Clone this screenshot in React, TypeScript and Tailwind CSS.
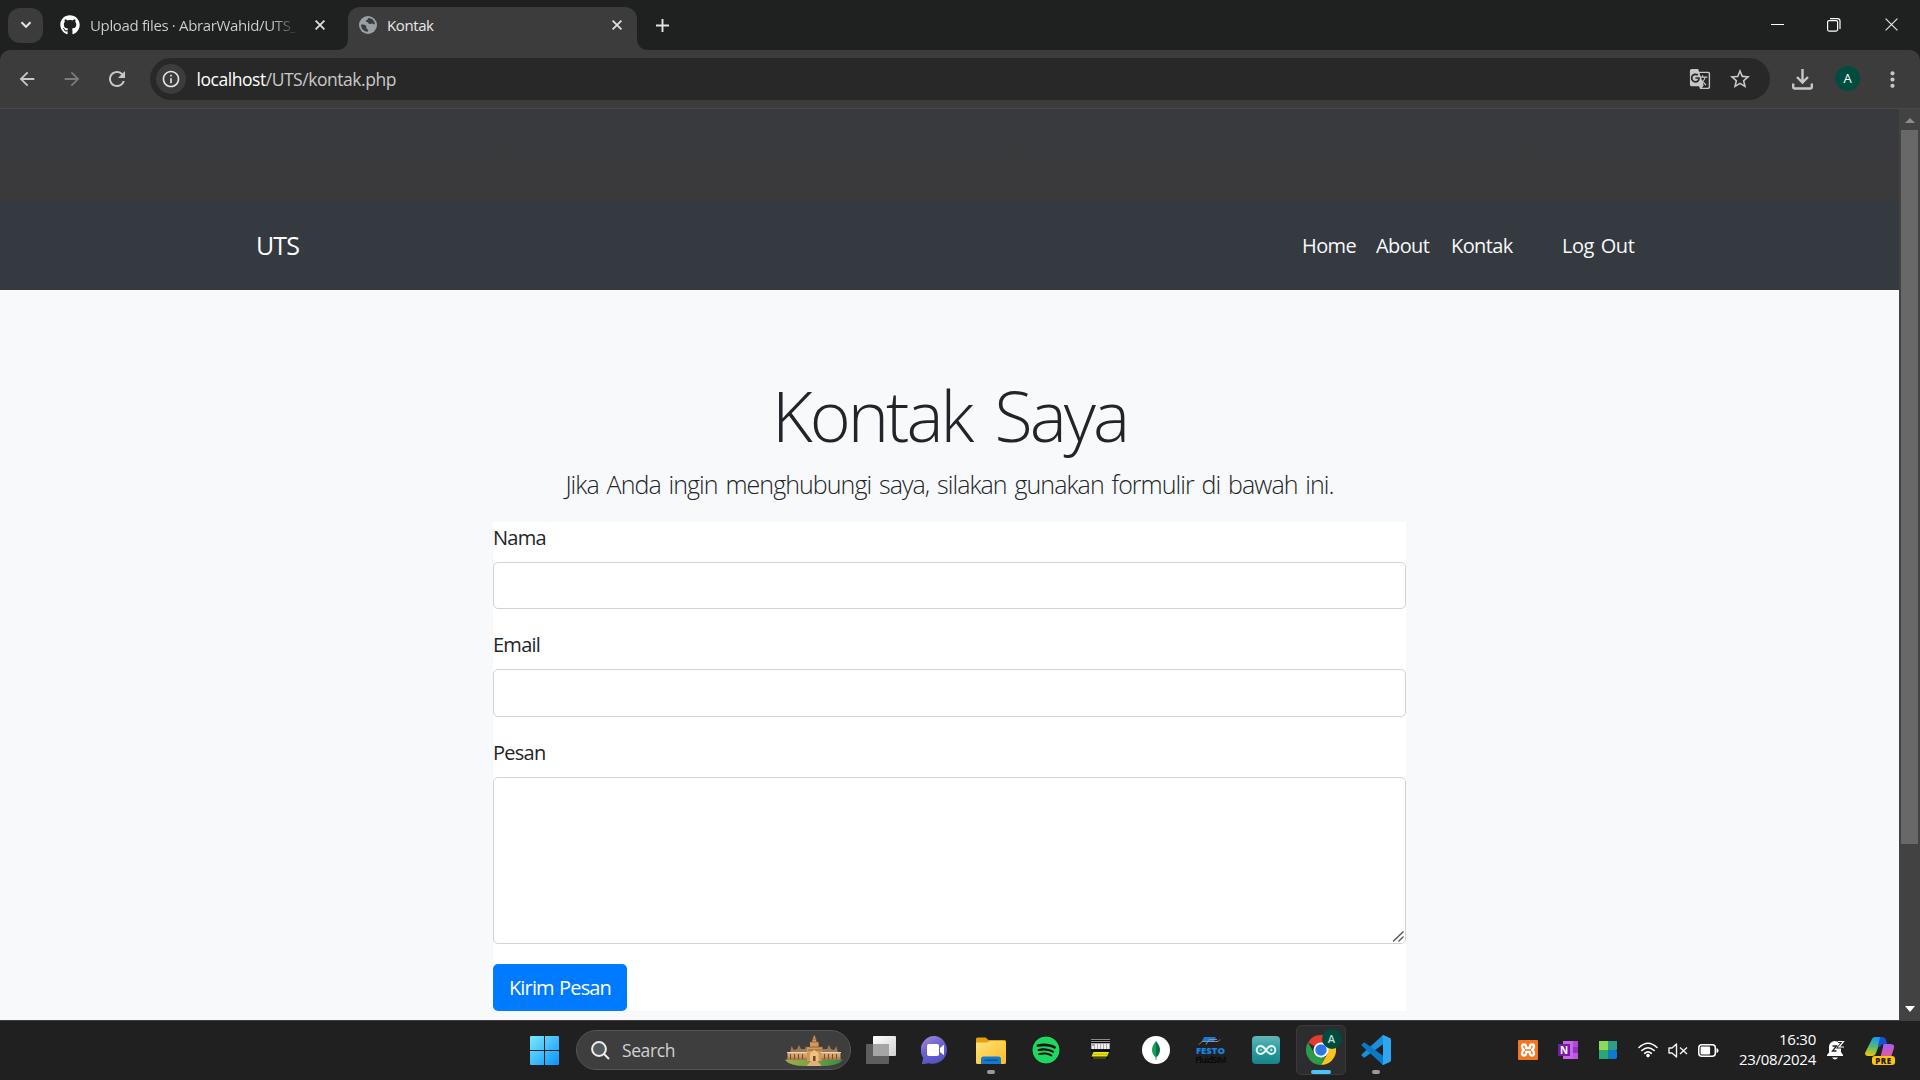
import React from "react";
import { FaGithub, FaSpotify } from "react-icons/fa";
import { MdArrowBack, MdArrowForward, MdRefresh, MdInfoOutline, MdGTranslate, MdStarBorder, MdMoreVert } from "react-icons/md";

function Chevron() {
  return (
    <svg width="12" height="8" viewBox="0 0 12 8" fill="none" stroke="#e3e3e3" strokeWidth="2">
      <path d="M1.5 1.2 6 5.8l4.5-4.6" />
    </svg>
  );
}

function Cross({ size = 10, width = 1.7 }: { size?: number; width?: number }) {
  return (
    <svg width={size} height={size} viewBox={`0 0 ${size} ${size}`} stroke="#e3e3e3" strokeWidth={width}>
      <path d={`M.6.6 ${size - 0.6} ${size - 0.6}M${size - 0.6}.6.6 ${size - 0.6}`} />
    </svg>
  );
}

function Globe() {
  return (
    <svg width="18" height="18" viewBox="0 0 18 18">
      <circle cx="9" cy="9" r="9" fill="#9aa0a6" />
      <path d="M2 8.6c2.5 0 4.700.2 5.200 1.700.4 1.200-.5 2 .8 2.600 1.300.5 1.700 1.500.9 2.700C5 16 2 12.800 2 8.600ZM9.500 2c-1 .8-.4 1.600-1.700 2-1.400.5-1.100 1.900.2 2.100 1.600.2 1.300 1.900 2.700 2 1.500 0 2.300-1 3.300-.2.7.6 1.300.5 2 .3C15.600 4.600 12.900 2.200 9.500 2Z" fill="#3c3c3c" />
    </svg>
  );
}

function TabStrip() {
  return (
    <div className="flex h-[50px] shrink-0 items-center bg-[#1f2120] pl-2">
      <div className="flex h-[35px] w-[35px] items-center justify-center rounded-[12px] bg-[#3c3c3c]"><Chevron /></div>
      <FaGithub className="ml-[17px] h-5 w-5 shrink-0 text-white" />
      <div className="ml-[10px] w-[208px] overflow-hidden whitespace-nowrap bg-gradient-to-r from-[#d0d2d1] from-88% to-[#1f2120] bg-clip-text text-[15px] tracking-[-0.350px] text-transparent">
        Upload files · AbrarWahid/UTS_P
      </div>
      <div className="ml-[17px] flex w-[10px]"><Cross /></div>
      <div className="flex h-full w-[23px] items-end justify-end">
        <svg width="12" height="12"><path d="M12 0v12H0C8 12 12 8 12 0Z" fill="#3c3c3c" /></svg>
      </div>
      <div className="mt-[7px] flex h-[43px] w-[289px] items-center rounded-t-[12px] bg-[#3c3c3c] pb-[7px] pl-[11px] pr-[15px]">
        <Globe />
        <span className="ml-[10px] flex-1 text-[15px] tracking-[-0.400px] text-[#e8e8e8]">Kontak</span>
        <Cross />
      </div>
      <div className="flex h-full w-3 items-end">
        <svg width="12" height="12"><path d="M0 0v12h12C4 12 0 8 0 0Z" fill="#3c3c3c" /></svg>
      </div>
      <svg className="ml-[7px]" width="13" height="13" stroke="#e3e3e3" strokeWidth="1.900"><path d="M6.500 0v13M0 6.500h13" /></svg>
      <div className="flex flex-1 items-center justify-end pb-px pr-[22px]">
        <svg width="13" height="13"><path d="M0 6.500h13" stroke="#fff" /></svg>
        <svg className="ml-[43px]" width="14" height="14" fill="none" stroke="#fff" strokeWidth="1.200">
          <rect x=".6" y="2.600" width="10" height="10.500" rx="1.500" />
          <path d="M3 .6h7.500q2.500 0 2.500 2.500V11" />
        </svg>
        <div className="ml-[44px]"><Cross size={13} width={1.200} /></div>
      </div>
    </div>
  );
}

function Toolbar() {
  return (
    <div className="bg-[#1f2120]">
      <div className="flex h-[59px] items-center rounded-t-[10px] border-b border-[#484a48] bg-[#3c3c3c] text-[#c7c7c7]">
        <MdArrowBack className="ml-[16px] h-[22px] w-[22px]" />
        <MdArrowForward className="ml-[23px] h-[22px] w-[22px] text-[#7b7b7b]" />
        <MdRefresh className="ml-[22px] h-[24px] w-[24px]" />
        <div className="ml-[21px] flex h-[42px] w-[1620px] items-center rounded-full bg-[#282828] pl-[6px] pr-[18px]">
          <div className="flex h-[30px] w-[30px] items-center justify-center rounded-full bg-[#3c3c3c]">
            <MdInfoOutline className="h-[20px] w-[20px] text-[#e3e3e3]" />
          </div>
          <div className="ml-[10.500px] flex-1 text-[17.500px] tracking-[-0.460px] text-[#c9c9c9]">
            <span className="text-white">localhost</span>/UTS/kontak.php
          </div>
          <MdGTranslate className="h-[22px] w-[22px]" />
          <MdStarBorder className="ml-[17px] h-[24px] w-[24px]" />
        </div>
        <svg className="ml-[22px]" width="21" height="21" fill="none" stroke="#c7c7c7" strokeWidth="2.400">
          <path d="M10.500 0v13M5 8l5.500 5.500L16 8M1.200 14.500v3.800q0 1.200 1.200 1.200h16.200q1.200 0 1.200-1.200v-3.800" />
        </svg>
        <div className="mb-px ml-[22px] flex h-[25px] w-[25px] items-center justify-center rounded-full bg-[#004d40] text-[13px] text-white">A</div>
        <MdMoreVert className="ml-[20px] h-[25px] w-[25px]" />
      </div>
    </div>
  );
}

function ContactPage() {
  return (
    <div className="flex min-h-0 flex-1 flex-col bg-[#f8f9fa] text-[#212529]">
      <div className="h-[91px] shrink-0 bg-gradient-to-b from-[#393a3f] to-[#3a3a3b]" />
      <nav className="flex h-[90px] shrink-0 items-center bg-[#343a40] pl-[256px] pt-[2px] text-[20px] tracking-[-0.600px] text-[#f8f9fa]">
        <span className="text-[25px] tracking-[-0.900px] text-white">UTS</span>
        <div className="ml-auto flex">
          <span className="w-[74px]">Home</span>
          <span className="w-[75px]">About</span>
          <span className="w-[111px]">Kontak</span>
          <span className="w-[337px] tracking-[-0.450px] [word-spacing:2px]">Log Out</span>
        </div>
      </nav>
      <main className="flex flex-col items-center">
        <h1 className="mt-[83px] h-[84px] whitespace-nowrap text-[70px] font-light leading-[84px] tracking-[-3px] [word-spacing:8px]">Kontak Saya</h1>
        <p className="mt-[8px] h-[38px] whitespace-nowrap text-[25px] font-light leading-[38px] tracking-[-0.950px] [word-spacing:2.300px]">
          Jika Anda ingin menghubungi saya, silakan gunakan formulir di bawah ini.
        </p>
        <form className="mt-[18.700px] w-[913px] bg-white text-[20px] leading-[32px] tracking-[-0.750px]">
          <label className="mb-[8px] block">Nama</label>
          <input className="mb-[20px] block h-[47.500px] w-full rounded-[5px] border border-[#ced4da] bg-white" />
          <label className="mb-[8px] block">Email</label>
          <input className="mb-[20px] block h-[47.500px] w-full rounded-[5px] border border-[#ced4da] bg-white" />
          <label className="mb-[8px] block">Pesan</label>
          <div className="mb-[20px] flex h-[167.300px] items-end justify-end rounded-[5px] border border-[#ced4da] bg-white p-[1px]">
            <svg width="11" height="11" stroke="#555" strokeWidth="1.300"><path d="M0 10.500 10.500.5M5.500 10.500l5-5" /></svg>
          </div>
          <button type="button" className="block h-[47px] w-[134px] whitespace-nowrap rounded-[5px] bg-[#007bff] pt-px tracking-[-0.850px] text-white [word-spacing:1px]">Kirim Pesan</button>
        </form>
      </main>
    </div>
  );
}

function Scrollbar() {
  return (
    <div className="flex w-[21px] shrink-0 flex-col items-center bg-[#424242]">
      <svg className="mt-[9px]" width="10" height="5"><path d="M0 5 5 0l5 5Z" fill="#8b8b8b" /></svg>
      <div className="mt-[7px] h-[714px] w-[17px] bg-[#686868]" />
      <svg className="mb-[8px] mt-auto" width="10" height="6"><path d="M0 0h10L5 6Z" fill="#fff" /></svg>
    </div>
  );
}

function Temple() {
  return (
    <svg width="58" height="31" viewBox="0 0 58 31">
      <defs>
        <linearGradient id="stone" x2="0" y2="1"><stop stopColor="#e2b98a" /><stop offset=".6" stopColor="#c99a66" /><stop offset="1" stopColor="#a06f42" /></linearGradient>
        <linearGradient id="lawn" x2="1"><stop stopColor="#9cb04a" /><stop offset=".6" stopColor="#6e9a3e" /><stop offset="1" stopColor="#2f8a4c" /></linearGradient>
      </defs>
      <path d="M0 25q10-4 29-4t29 4q-5 6-22 6H20Q5 31 0 25Z" fill="url(#lawn)" />
      <path d="m5 18 1.500-7L9 15l3-1 2-4 2 4h4l1-3 2 3h12l2-3 1 3h4l2-4 2 4 3 1 2.500-4L53 18Z" fill="#9b7857" />
      <path d="M2.500 17h53v8h-53Z" fill="url(#stone)" />
      <path d="M22 26V12h3V7h2l1-4 1.300-3 1.300 3 1 4h2v5h3v14Z" fill="#cf9a5c" />
      <path d="M26 7h7M24 12h11M23 15h13M27 4h5" stroke="#8d5b30" strokeWidth=".9" />
      <path d="M2 17.500h20M36 17.500h20" stroke="#f0d3a8" strokeWidth="1.200" />
      <path d="M5.500 19v5M9.500 19v5M13.500 19v5M17.500 19v5M39.500 19v5M43.500 19v5M47.500 19v5M51.500 19v5" stroke="#7a4d2c" strokeWidth="1.100" />
      <path d="M25 26v-8l4.300-3 4.300 3v8Z" fill="#edc184" />
      <path d="M28 26v-5h2.600v5" fill="#7c4a20" />
      <path d="M26 26h6.500l4 5H21.500Z" fill="#e0b17e" />
    </svg>
  );
}

function TaskCell({ children, dot }: { children: React.ReactNode; dot?: boolean }) {
  return (
    <div className="relative flex h-[60px] w-[55px] shrink-0 items-center justify-center">
      {children}
      {dot && <span className="absolute bottom-[6px] h-[4px] w-[8px] rounded-full bg-[#9a9a9a]" />}
    </div>
  );
}

function WindowsLogo() {
  return (
    <svg width="29" height="29" viewBox="0 0 29 29">
      <defs><linearGradient id="win" x2="1" y2="1"><stop stopColor="#7aeaff" /><stop offset="1" stopColor="#0a93fa" /></linearGradient></defs>
      <path d="M1 0h13v14H0V1q0-1 1-1ZM15 0h13q1 0 1 1v13H15ZM0 15h14v14H1q-1 0-1-1ZM15 15h14v13q0 1-1 1H15Z" fill="url(#win)" />
    </svg>
  );
}

function ChatIcon() {
  return (
    <svg width="29" height="29" viewBox="0 0 29 29">
      <defs><linearGradient id="chat" x1="0" y1="0" x2=".5" y2="1"><stop stopColor="#a98be0" /><stop offset=".5" stopColor="#6f63cf" /><stop offset="1" stopColor="#5452c4" /></linearGradient></defs>
      <path d="M14.500 0A14 14 0 1 1 8 27.200L.8 28.200l1.400-6.300A14 14 0 0 1 14.500 0Z" fill="url(#chat)" />
      <rect x="6" y="8" width="12" height="12" rx="1.800" fill="#fff" />
      <path d="m19 12 4-3.200v10.400l-4-3.200Z" fill="#fff" />
    </svg>
  );
}

function Folder() {
  return (
    <svg width="30" height="27" viewBox="0 0 30 27">
      <defs><linearGradient id="folder" x2="1" y2="1"><stop stopColor="#ffe27a" /><stop offset="1" stopColor="#f9bc25" /></linearGradient></defs>
      <path d="M0 2q0-1.500 1.500-1.500h8L12.500 3h16q1.500 0 1.500 1.500V10H0Z" fill="#e5a00d" />
      <path d="M0 5.500h11L14 4h14.500Q30 4 30 5.500v20q0 1.500-1.500 1.500h-27Q0 27 0 25.500Z" fill="url(#folder)" />
      <path d="M5 27v-5q0-2.500 2.500-2.500h15Q25 19.500 25 22v5Z" fill="#1679cd" />
      <path d="M8.500 23.200h13" stroke="#0a4f93" strokeWidth="1.300" />
    </svg>
  );
}

function PlcIcon() {
  return (
    <svg width="19" height="20" viewBox="0 0 19 20">
      <path d="M0 0h19v3H0Z" fill="#8c8c8c" />
      <path d="M0 1.500h19M0 3.500h19" stroke="#0c0c0c" strokeWidth="1" />
      <path d="M0 4h19v6H0Z" fill="#a9a9a9" />
      <path d="M2 7v3M5 5v5M8 5v5M11 5v5M14 5v5M17 5v5" stroke="#fff" strokeWidth="1.600" />
      <path d="M0 10.500h19v2H0Z" fill="#0c0c0c" />
      <path d="M2.500 13H18l-2 4.500H.5Z" fill="#ece50c" />
      <path d="M2.500 15.200h14" stroke="#b0aa10" strokeWidth=".8" />
      <path d="M0 18h17v2H0Z" fill="#0c0c0c" /><path d="M2 19h13" stroke="#a09b20" strokeWidth=".8" />
    </svg>
  );
}

function MongoIcon() {
  return (
    <svg width="28" height="28" viewBox="0 0 28 28">
      <circle cx="14" cy="14" r="14" fill="#fff" />
      <path d="M14 5q-8 9.500 0 17Z" fill="#10a05a" />
      <path d="M14 5q8 9.500 0 17Z" fill="#0a6c42" />
      <path d="M14 20v4" stroke="#6f9c86" />
    </svg>
  );
}

function FestoIcon() {
  return (
    <div className="flex h-[28px] w-[31px] flex-col items-center">
      <svg width="28" height="10" viewBox="0 0 28 10">
        <path d="M7 1h12l-2 4H5Z" fill="#1478d4" />
        <path d="m2 8.500 3-3h16l2-2M9 8.500l3-5h8" stroke="#8a9099" fill="none" />
      </svg>
      <span className="text-[9.500px] font-extrabold leading-[9px] text-[#1585e5]">FESTO</span>
      <span className="text-[8.500px] font-semibold leading-[9px] tracking-[-0.600px] text-[#050505]">FluidSIM</span>
    </div>
  );
}

function ArduinoIcon() {
  return (
    <svg width="28" height="28" viewBox="0 0 28 28">
      <defs><linearGradient id="ard" x2="0" y2="1"><stop stopColor="#62b5b6" /><stop offset=".5" stopColor="#2b9ca0" /><stop offset="1" stopColor="#168389" /></linearGradient></defs>
      <rect width="28" height="28" rx="4" fill="url(#ard)" />
      <path d="M14 14c-2-3-3.500-4-5.300-4a4 4 0 0 0 0 8c1.800 0 3.300-1 5.300-4s3.500-4 5.300-4a4 4 0 0 1 0 8c-1.800 0-3.300-1-5.300-4Z" fill="none" stroke="#e7f5f5" strokeWidth="2" />
      <path d="M7.500 14h2.600M18 14h2.600M19.300 12.700v2.600" stroke="#e7f5f5" strokeWidth=".9" />
    </svg>
  );
}

function ChromeIcon() {
  return (
    <svg width="30" height="30" viewBox="0 0 30 30">
      <path d="M15 15 2 7.500A15 15 0 0 1 28 7.500H15Z" fill="#e33b2e" />
      <path d="M15 7.500h13A15 15 0 0 1 15 30l6.500-11.300Z" fill="#fcc31e" />
      <path d="M2 7.500 8.500 18.700Q12 23 19.500 21.500L15 30A15 15 0 0 1 2 7.500Z" fill="#2a9b48" />
      <circle cx="15" cy="15" r="7.500" fill="#fff" />
      <circle cx="15" cy="15" r="5.700" fill="#2c76e8" />
    </svg>
  );
}

function VsCodeIcon() {
  return (
    <svg width="30" height="30" viewBox="0 0 30 30">
      <path d="M22 0 .8 19.300q-.8.800 0 1.500l1.700 1.500q.7.500 1.500 0L30 3.600Z" fill="#1c8fdb" />
      <path d="M22 30 .8 10.700q-.8-.8 0-1.500l1.700-1.500q.7-.5 1.500 0L30 26.400Z" fill="#0a7ac8" />
      <path d="M22 0q-1.300 1 0 2.500v25Q20.700 29 22 30l7-3.300q1-.5 1-1.700V5q0-1.200-1-1.700Z" fill="#2aa9f0" />
    </svg>
  );
}

function CopilotIcon() {
  return (
    <div className="relative h-[28px] w-[30px]">
      <svg width="30" height="22" viewBox="0 0 30 22">
        <defs>
          <linearGradient id="copA" x1=".4" y1="0" x2=".2" y2="1"><stop stopColor="#139ef0" /><stop offset=".5" stopColor="#5bbb6a" /><stop offset="1" stopColor="#f4c90b" /></linearGradient>
          <linearGradient id="copB" x2="0" y2="1"><stop stopColor="#a55df0" /><stop offset="1" stopColor="#ef5a8b" /></linearGradient>
        </defs>
        <path d="M7 2q1-2 3-2h7l-6 16q-1 3-4 3H3q-3 0-3-3Z" fill="url(#copA)" />
        <path d="M15 0h2q3 0 4 3l1 4h-3q-3 0-4 3l-2-1Z" fill="#1a50d4" />
        <path d="M19 7h6q5 0 4 4l-3 9q-1 2-3 2h-8l3-12q0-3 1-3Z" fill="url(#copB)" />
      </svg>
      <span className="absolute bottom-0 right-0 flex h-[9px] w-[23px] items-center justify-center rounded-[3px] bg-[#fdc60b] text-[8px] font-extrabold leading-[9px] tracking-[0.500px] text-[#1b1b1b]">PRE</span>
    </div>
  );
}

function Tray() {
  return (
    <div className="ml-auto flex h-full items-center">
      <div className="flex w-10 justify-center">
        <svg width="20" height="20" viewBox="0 0 20 20">
          <rect width="20" height="20" rx="1" fill="#f37623" />
          <path d="M8 6.500Q8 4.500 6 4.500T4 6.500q0 2 2 3.500-2 1-2 3.500 0 2 2 2t2-2V12h4v1.500q0 2 2 2t2-2Q16 11 14 10q2-1.500 2-3.500t-2-2-2 2V8H8Z" fill="none" stroke="#fff" strokeWidth="2.300" strokeLinejoin="round" />
        </svg>
      </div>
      <div className="flex w-10 justify-center">
        <div className="relative h-5 w-5">
          <svg width="20" height="20"><path d="M5 1h15v18H5Z" fill="#ca64ea" /><path d="M15 1h5v6h-5Z" fill="#ae4bd5" /><path d="M15 7h5v6h-5Z" fill="#9332bf" /><path d="M15 13h5v6h-5Z" fill="#b75be0" /><path d="M0 4h12v12H0Z" fill="#7719aa" /></svg>
          <span className="absolute left-[2px] top-[4px] text-[10px] font-bold leading-[12px] text-white">N</span>
        </div>
      </div>
      <div className="flex w-10 justify-center">
        <svg width="18" height="18"><path d="M0 0h9v9H0Z" fill="#8bd957" /><path d="M9 0h9v9H9Z" fill="#2f9e86" /><path d="M0 9h9v9H0Z" fill="#2ba676" /><path d="M9 9h2v9H9Z" fill="#1b8078" /><rect x="10" y="9" width="8" height="9" rx="2" fill="#0c7ad8" /></svg>
      </div>
      <div className="ml-[5px] flex w-[30px] justify-center">
        <svg width="20" height="16" fill="none" stroke="#fff" strokeWidth="1.600" strokeLinecap="round">
          <path d="M1 5.500Q10-3 19 5.500M3.800 8.500q6.200-5.500 12.400 0M6.700 11.300q3.300-2.800 6.600 0" /><circle cx="10" cy="13.600" r="1" fill="#fff" />
        </svg>
      </div>
      <div className="flex w-[30px] justify-center">
        <svg width="20" height="15" fill="none" stroke="#f2f2f2" strokeWidth="1.400"><path d="M1 5h3l4.500-4v13L4 10H1ZM12 4.500l7 6.500M19 4.500 12 11" strokeLinejoin="round" /></svg>
      </div>
      <div className="flex w-[30px] justify-center">
        <svg width="21" height="13"><rect x=".8" y=".8" width="16.500" height="11.400" rx="3" fill="none" stroke="#fff" strokeWidth="1.500" /><rect x="2.600" y="2.600" width="9.500" height="7.800" rx="1" fill="#fff" /><path d="M18.500 4q2 .5 2 2.500t-2 2.500Z" fill="#fff" /></svg>
      </div>
      <div className="mb-[2px] flex w-[93px] flex-col items-end text-[15px] leading-[20px] tracking-[-0.250px] text-white">
        <span>16:30</span>
        <span>23/08/2024</span>
      </div>
      <svg className="ml-[11px]" width="18" height="20" viewBox="0 0 18 20">
        <path d="M0 15 2 12.500V7q0-5 5.500-6Q14 1 14 8v4l2 3v1H0Z" fill="#fff" /><path d="M5 17.500h6q-3 4-6 0Z" fill="#fff" />
        <path d="M5.500 6h4l-4 5h4" stroke="#202020" strokeWidth="1.300" fill="none" />
        <path d="M11 1.500h5.500L12 7h5" stroke="#202020" strokeWidth="3" fill="none" /><path d="M11 1.500h5.500L12 7h5" stroke="#fff" strokeWidth="1.200" fill="none" />
      </svg>
      <div className="ml-[20px] mr-[25px] mt-[2px]"><CopilotIcon /></div>
    </div>
  );
}

function Taskbar() {
  return (
    <div className="flex h-[60px] shrink-0 items-center bg-[#202020] pl-[517px] shadow-[inset_0_1px_0_#3f3f3f]">
      <TaskCell><WindowsLogo /></TaskCell>
      <div className="ml-[4px] mr-[2px] flex h-[40px] w-[275px] items-center rounded-full border border-[#555] bg-[#3e3e3e] pl-[14px] pr-[7px]">
        <svg width="19" height="19" fill="none" stroke="#eee" strokeWidth="2"><circle cx="8" cy="8" r="6.900" fill="#555a5e" /><path d="m13 13 5 5" /></svg>
        <span className="ml-[12px] flex-1 text-[17.500px] tracking-[-0.400px] text-[#d2d2d2]">Search</span>
        <Temple />
      </div>
      <TaskCell>
        <svg width="30" height="28"><defs><linearGradient id="tv" x2="1" y2="1"><stop stopColor="#fff" /><stop offset="1" stopColor="#d0d0d0" /></linearGradient></defs><rect y="8" width="23" height="20" rx="1" fill="#5e5e5e" /><rect x="7" width="23" height="20" rx="1" fill="url(#tv)" /><path d="M7 8h16v12H7Z" fill="#a5a5a5" /></svg>
      </TaskCell>
      <TaskCell><ChatIcon /></TaskCell>
      <TaskCell dot><Folder /></TaskCell>
      <TaskCell><FaSpotify className="h-[28px] w-[28px] rounded-full bg-[#101010] text-[#1ed760]" /></TaskCell>
      <TaskCell><div className="mb-[2px]"><PlcIcon /></div></TaskCell>
      <TaskCell><div className="mb-px"><MongoIcon /></div></TaskCell>
      <TaskCell><FestoIcon /></TaskCell>
      <TaskCell><ArduinoIcon /></TaskCell>
      <TaskCell>
        <div className="relative flex h-[50px] w-[50px] items-center justify-center rounded-[5px] border border-[#3a3a3c] bg-[#2d2d2f]">
          <ChromeIcon />
          <span className="absolute right-[3px] top-[3px] flex h-[20px] w-[20px] items-center justify-center rounded-full bg-[#004d40] text-[11px] font-semibold text-[#c5d8d5]">A</span>
          <span className="absolute bottom-0 h-[4px] w-[20px] rounded-full bg-[#4cc2ff]" />
        </div>
      </TaskCell>
      <TaskCell dot><VsCodeIcon /></TaskCell>
      <Tray />
    </div>
  );
}

export default function App() {
  return (
    <div className="flex h-[1080px] w-[1920px] flex-col overflow-hidden font-['Open_Sans','Noto_Sans',sans-serif]">
      <TabStrip />
      <Toolbar />
      <div className="flex min-h-0 flex-1">
        <ContactPage />
        <Scrollbar />
      </div>
      <Taskbar />
    </div>
  );
}
